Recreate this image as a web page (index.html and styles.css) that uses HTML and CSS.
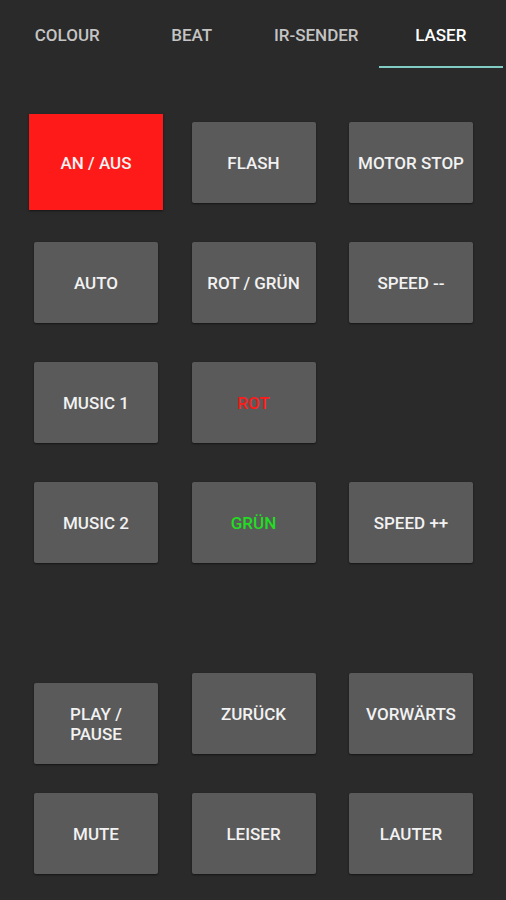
FILE: index.html
```html
<!DOCTYPE html>
<html lang="en">
<head>
    <meta charset="UTF-8">
    <meta name="viewport" content="width=device-width, initial-scale=1.0">
    <title>Laser</title>
    <link rel="stylesheet" href="styles.css">
</head>
<body>
    <div class="tabs">
        <div class="tab">Colour</div>
        <div class="tab">Beat</div>
        <div class="tab">IR-Sender</div>
        <div class="tab active">Laser</div>
    </div>

    <div class="pad">
        <div class="row">
            <div class="btn power">AN / AUS</div>
            <div class="btn">Flash</div>
            <div class="btn">Motor Stop</div>
        </div>
        <div class="row">
            <div class="btn">Auto</div>
            <div class="btn">Rot / Grün</div>
            <div class="btn">Speed --</div>
        </div>
        <div class="row">
            <div class="btn">Music 1</div>
            <div class="btn red-text">Rot</div>
            <div class="spacer"></div>
        </div>
        <div class="row">
            <div class="btn">Music 2</div>
            <div class="btn green-text">Grün</div>
            <div class="btn">Speed ++</div>
        </div>

        <!-- media controls -->
        <div class="row media">
            <div class="btn low">Play /<br>Pause</div>
            <div class="btn">Zurück</div>
            <div class="btn">Vorwärts</div>
        </div>
        <div class="row">
            <div class="btn">Mute</div>
            <div class="btn">Leiser</div>
            <div class="btn">Lauter</div>
        </div>
    </div>
</body>
</html>
```

FILE: styles.css
```css
body {
    margin: 0;
    background-color: #2a2a2a;
    font-family: Roboto, "Liberation Sans", sans-serif;
    color: #fff;
}
.tabs {
    display: flex;
    height: 68px;
    padding: 0 3px 0 5px;
}
.tab {
    flex: 1;
    display: flex;
    align-items: center;
    justify-content: center;
    padding-top: 4px;
    text-transform: uppercase;
    font-weight: 500;
    font-size: 17px;
    color: #c4c4c4;
    border-bottom: 2px solid transparent;
}
.tab.active {
    color: #fff;
    border-bottom-color: #80cbc4;
}
.pad {
    padding: 54px 0 0 34px;
}
.row {
    display: flex;
    align-items: flex-start;
    gap: 33.5px;
    margin-bottom: 39px;
}
.row.media {
    margin-top: 110px;
}
.btn, .spacer {
    width: 124px;
    height: 81px;
    flex: none;
}
.btn {
    display: flex;
    flex-direction: column;
    align-items: center;
    justify-content: center;
    text-align: center;
    background-color: #5a5a5a;
    border-radius: 2px;
    box-shadow: 0 1px 2px rgba(0, 0, 0, 0.5);
    text-transform: uppercase;
    font-weight: 500;
    font-size: 17px;
    line-height: 20px;
    color: #f2f2f2;
}
.btn.power {
    width: 134px;
    height: 96px;
    margin: -8px -5px;
    padding-top: 1px;
    box-sizing: border-box;
    background-color: #ff1a1a;
    border-radius: 0;
}
.btn.low {
    margin-top: 10px;
    margin-bottom: -10px;
}
.row .red-text {
    color: #ff1a1a;
}
.row .green-text {
    color: #22dd22;
}
```
